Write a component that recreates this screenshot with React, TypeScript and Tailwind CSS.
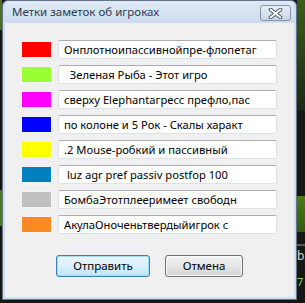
import React from "react";

const notes = [
  { color: "#ff0000", text: "Онплотноипассивнойпре-флопетаг" },
  { color: "#99ff33", text: "  Зеленая Рыба - Этот игро" },
  { color: "#ff00ff", text: "сверху Elephantагресс префло,пас" },
  { color: "#0000ff", text: "по колоне и 5 Рок - Скалы характ" },
  { color: "#ffff00", text: ".2 Mouse-робкий и пассивный" },
  { color: "#0080c0", text: " luz agr pref passiv postfop 100" },
  { color: "#c0c0c0", text: "БомбаЭтотплееримеет свободн" },
  { color: "#fa8a1f", text: "АкулаОноченьтвердыйигрок с" },
];

const CloseIcon = () => (
  <svg width="15" height="11" viewBox="0 0 15 11">
    <path d="M2.5 1.5 L12.5 9.5 M12.5 1.5 L2.5 9.5" stroke="#4a5668" strokeWidth="3.8" strokeLinecap="round" />
    <path d="M2.5 1.5 L12.5 9.5 M12.5 1.5 L2.5 9.5" stroke="#ffffff" strokeWidth="2" strokeLinecap="round" />
  </svg>
);

export default function App() {
  return (
    <div
      className="relative w-[305px] h-[303px] overflow-hidden bg-[#161616]"
      style={{ fontFamily: '"Noto Sans", "Open Sans", sans-serif' }}
    >
      {/* game table peeking out behind the dialog */}
      <div className="absolute right-0 top-0 w-[8px] h-[110px] bg-gradient-to-b from-[#3d5e1c] to-[#1c2814]" />
      <div className="absolute right-0 top-[196px] w-[8px] h-[36px] bg-gradient-to-b from-[#4c7a1a] to-[#355812]" />
      <div className="absolute right-0 top-[244px] w-[8px] h-[2px] bg-[#5a5a5a]" />
      <div className="absolute right-0 top-[250px] w-[8px] text-[12px] leading-none text-[#d8d8d8]">b</div>
      <div className="absolute right-0 top-[276px] w-[8px] text-[11px] leading-none text-[#8cd66a]">7</div>
      <div className="absolute left-0 top-0 w-[2px] h-[30px] bg-[#4a7020]" />
      <div className="absolute left-0 top-[190px] w-[2px] h-[36px] bg-[#4a7a1c]" />

      <div className="relative ml-[2px] w-[295px] h-[300px] flex flex-col rounded-t-[6px] border border-[#64758a] bg-[#cfdeee] px-[2px] pb-[2px]">
        {/* title bar */}
        <div className="h-[22px] flex items-center justify-between pl-[7px] pr-[3px] rounded-t-[5px] bg-gradient-to-b from-[#e0eaf6] to-[#ccdcee]">
          <span className="text-[11.5px] text-[#2c3c50]">Метки заметок об игроках</span>
          <button className="w-[31px] h-[16px] mt-[2px] flex items-center justify-center rounded-[3px] border border-[#8494a8] bg-gradient-to-b from-[#e8eff8] to-[#c9d7e8]">
            <CloseIcon />
          </button>
        </div>

        {/* client area */}
        <div className="flex-1 flex flex-col bg-[#f0f0f0] pt-[17px] pl-[16px]">
          <div className="flex flex-col gap-[6px]">
            {notes.map((n) => (
              <div key={n.color} className="flex items-center gap-[6px] h-[19px]">
                <div className="w-[31px] h-[17px] border border-[#f4f4f4]" style={{ backgroundColor: n.color }} />
                <div className="w-[219px] h-[19px] flex items-center pl-[5px] rounded-[2px] border border-[#dde2e8] border-t-[#abadb3] bg-white">
                  <span className="whitespace-pre text-[11.2px] text-black leading-none">{n.text}</span>
                </div>
              </div>
            ))}
          </div>

          <div className="flex justify-center gap-[15px] mt-[21px] pr-[16px]">
            <button className="w-[94px] h-[22px] rounded-[3px] border border-[#3c7fb1] bg-gradient-to-b from-[#eaf6fd] via-[#d9f0fc] to-[#bee6fd] text-[11.5px] text-black shadow-[inset_0_0_0_1px_#a8dcf5]">
              Отправить
            </button>
            <button className="w-[78px] h-[22px] rounded-[3px] border border-[#707070] bg-gradient-to-b from-[#f2f2f2] via-[#e6e6e6] to-[#d2d2d2] text-[11.5px] text-black shadow-[inset_0_0_0_1px_#fbfbfb]">
              Отмена
            </button>
          </div>
        </div>
      </div>
    </div>
  );
}
